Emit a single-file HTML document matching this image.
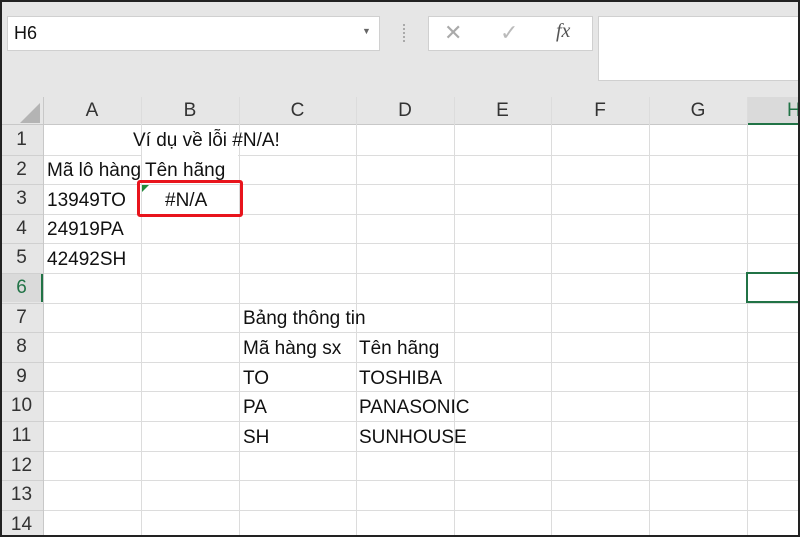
<!DOCTYPE html>
<html><head><meta charset="utf-8"><style>
*{margin:0;padding:0;box-sizing:border-box}
html,body{width:800px;height:537px;overflow:hidden}
body{background:#e6e6e6;font-family:"Liberation Sans",sans-serif;position:relative}
.frame{position:absolute;left:0;top:0;width:800px;height:537px;border:2px solid #222;pointer-events:none;z-index:10}
.box{position:absolute;background:#fff;border:1px solid #d0d0d0}
.t{position:absolute;font-size:19px;color:#111;white-space:nowrap}
.hl{position:absolute;background:#dadada}
.grid{position:absolute;left:43px;top:125px;right:0;bottom:0;background:#fff}
.h{position:absolute;left:43px;right:0;height:1px;background:#dcdcdc}
.v{position:absolute;top:97px;bottom:0;width:1px;background:#dcdcdc}
.ch{position:absolute;top:97px;height:28px;font-size:19px;color:#333;text-align:center;line-height:28px}
.rh{position:absolute;left:0;width:43px;font-size:19px;color:#333;text-align:center}
</style></head><body>
<div class="box" style="left:7px;top:16px;width:373px;height:35px"></div>
<div class="t" style="left:14px;top:23px;font-size:18px">H6</div>
<div class="t" style="left:362px;top:26px;font-size:9px;color:#666">▼</div>
<div style="position:absolute;left:403px;top:24px;width:2px;height:18px;border-left:2px dotted #aaa"></div>
<div class="box" style="left:428px;top:16px;width:165px;height:35px"></div>
<div class="t" style="left:444px;top:20px;font-size:22px;color:#aaa">✕</div>
<div class="t" style="left:500px;top:20px;font-size:22px;color:#bbb">✓</div>
<div class="t" style="left:556px;top:20px;font-size:20px;color:#555;font-family:'Liberation Serif',serif;font-style:italic">fx</div>
<div class="box" style="left:598px;top:16px;width:205px;height:65px"></div>
<div style="position:absolute;left:0;top:97px;width:800px;height:28px;background:#e6e6e6;border-bottom:1px solid #c8c8c8"></div>
<div style="position:absolute;left:20px;top:103px;width:0;height:0;border-left:20px solid transparent;border-bottom:20px solid #b4b4b4"></div>
<div class="hl" style="left:747px;top:97px;width:53px;height:28px;border-bottom:2px solid #217346"></div>
<div class="grid"></div>
<div class="hl" style="left:0;top:273px;width:43px;height:29px"></div>
<div style="position:absolute;left:41px;top:273px;width:2px;height:29px;background:#217346"></div>
<div id="lines"></div>
<script>
var c=[43,141,239,356,454,551,649,747],n="ABCDEFGH",s="";
for(var i=0;i<8;i++){s+='<div class="v" style="left:'+c[i]+'px;'+(i==0?'background:#c8c8c8':'')+'"></div>';
var w=(i<7?c[i+1]:800)-c[i];s+='<div class="ch" style="left:'+c[i]+'px;width:'+w+'px;'+(i==7?'color:#217346;text-align:left;padding-left:40px':'')+'">'+n[i]+'</div>';}
for(var r=0;r<14;r++){var y=125+r*29.6;if(r<13)s+='<div class="h" style="top:'+Math.round(y+29.6)+'px"></div><div style="position:absolute;left:0;width:43px;height:1px;background:#d0d0d0;top:'+Math.round(y+29.6)+'px"></div>';
s+='<div class="rh" style="top:'+Math.round(y)+'px;height:29px;line-height:29px;'+(r==5?'color:#217346':'')+'">'+(r+1)+'</div>';}
document.getElementById('lines').innerHTML=s;
</script>
<div style="position:absolute;left:43px;top:125px;width:1px;height:412px;background:#c8c8c8"></div>
<div style="position:absolute;left:142px;top:126px;width:96px;height:28px;background:#fff"></div>
<div style="position:absolute;left:142px;top:155px;width:96px;height:28px;background:#fff"></div>
<div class="t" style="left:133px;top:130px">Ví dụ về lỗi #N/A!</div>
<div class="t" style="left:47px;top:160px;width:94px;overflow:hidden">Mã lô hàng</div>
<div class="t" style="left:145px;top:160px">Tên hãng</div>
<div class="t" style="left:47px;top:190px">13949TO</div>
<div class="t" style="left:165px;top:190px">#N/A</div>
<div style="position:absolute;left:142px;top:185px;border-top:7px solid #1f8a3a;border-right:7px solid transparent"></div>
<div style="position:absolute;left:137px;top:180px;width:106px;height:37px;border:3px solid #e8141c;border-radius:3px"></div>
<div class="t" style="left:47px;top:219px">24919PA</div>
<div class="t" style="left:47px;top:249px">42492SH</div>
<div class="t" style="left:243px;top:308px">Bảng thông tin</div>
<div class="t" style="left:243px;top:338px">Mã hàng sx</div>
<div class="t" style="left:359px;top:338px">Tên hãng</div>
<div class="t" style="left:243px;top:368px">TO</div>
<div class="t" style="left:359px;top:368px">TOSHIBA</div>
<div class="t" style="left:243px;top:397px">PA</div>
<div class="t" style="left:359px;top:397px">PANASONIC</div>
<div class="t" style="left:243px;top:427px">SH</div>
<div class="t" style="left:359px;top:427px">SUNHOUSE</div>
<div style="position:absolute;left:746px;top:272px;width:54px;height:31px;border:2px solid #217346;border-right:none"></div>
<div class="frame"></div>
</body></html>
